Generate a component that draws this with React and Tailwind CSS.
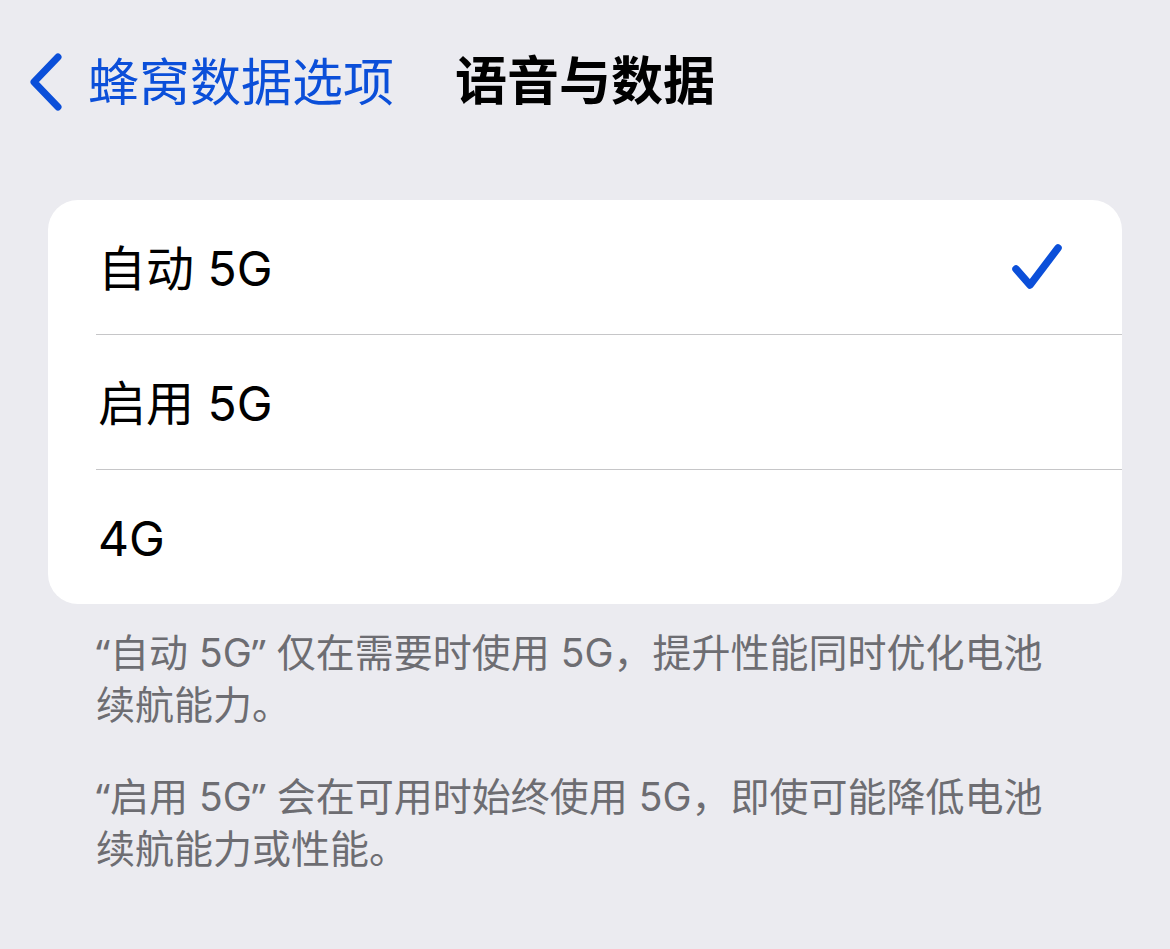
import React from 'react';

const FONT = 'font-["Inter","Noto_Sans_CJK_SC",sans-serif]';

const OPCIONES = [
  { label: '自动 5G', checked: true },
  { label: '启用 5G', checked: false },
  { label: '4G', checked: false },
];

const Chevron = () => (
  <svg width="36" height="58" viewBox="0 0 36 58" fill="none">
    <path d="M30 4 L6 29 L30 54" stroke="#0b4fd9" strokeWidth="7" strokeLinecap="round" strokeLinejoin="round" />
  </svg>
);

const Check = () => (
  <svg width="50" height="48" viewBox="0 0 50 48" fill="none">
    <path d="M4 26 L18 42 L46 5" stroke="#0b4fd9" strokeWidth="7.5" strokeLinecap="round" strokeLinejoin="round" />
  </svg>
);

// comillas curvas, como en iOS
const Q = ({ children }) => <span className='font-["Noto_Sans",sans-serif]'>{children}</span>;

const App = () => {
  return (
    <div className={`min-h-screen bg-[#ebebf0] ${FONT}`}>
      {/* barra de navegación */}
      <div className="grid grid-cols-[1fr_auto_1fr] items-center h-[164px]">
        <div className="flex items-center pl-[28px] gap-[24px] text-[#0b4fd9]">
          <Chevron />
          <span className="text-[51px] leading-none">蜂窝数据选项</span>
        </div>
        <div className="text-[52px] leading-none font-bold text-black">语音与数据</div>
        <div />
      </div>

      <div className="mt-[36px] mx-[48px] bg-white rounded-[30px] overflow-hidden">
        {OPCIONES.map((op, i) => (
          <div key={i}>
            {i > 0 && <div className="ml-[48px] border-t border-[#c6c6c8]" />}
            <div className="h-[134px] flex items-center justify-between pl-[50px] pr-[60px]">
              <span className="text-[48px] leading-none text-black pt-[4px]">{op.label}</span>
              {op.checked && <Check />}
            </div>
          </div>
        ))}
      </div>

      <div className="pl-[96px] pr-[48px] pt-[22px] text-[39px] leading-[52px] text-[#6d6d72]">
        <p className="whitespace-nowrap">
          <Q>“</Q>自动 5G<Q>”</Q> 仅在需要时使用 5G，提升性能同时优化电池
          <br />
          续航能力。
        </p>
        <p className="mt-[39px] whitespace-nowrap">
          <Q>“</Q>启用 5G<Q>”</Q> 会在可用时始终使用 5G，即使可能降低电池
          <br />
          续航能力或性能。
        </p>
      </div>
    </div>
  );
};

export default App;
